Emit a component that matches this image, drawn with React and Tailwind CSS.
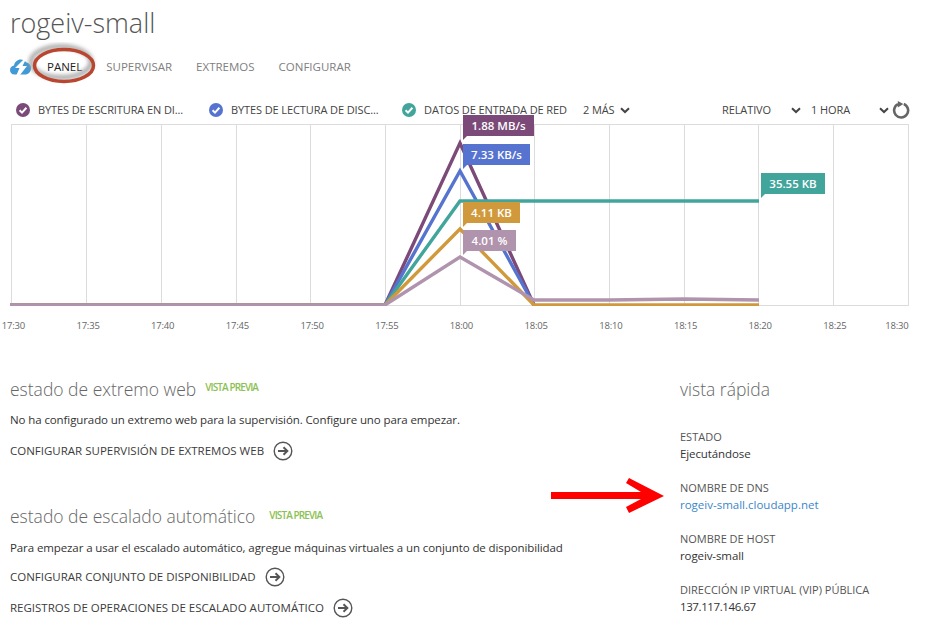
import React from "react";

const font = { fontFamily: '"Open Sans", "Noto Sans", sans-serif' };

const gridLines = [11, 86, 161, 236, 310, 385, 460, 534, 609, 684, 758, 833, 908];
const ticks = ["17:30", "17:35", "17:40", "17:45", "17:50", "17:55", "18:00", "18:05", "18:10", "18:15", "18:20", "18:25"];

const series = [
  { color: "#7b4a78", points: "10,185 385,185 460,23 534,185" },
  { color: "#5673cf", points: "10,185 385,185 460,51 534,185" },
  { color: "#42a59c", points: "10,185 385,185 460,81 759,81" },
  { color: "#d09a3c", points: "10,185 385,185 460,109 534,185 759,185" },
  { color: "#b093ad", points: "10,185 385,185 460,137 534,180 609,180 684,179 759,180" },
];

const tooltips = [
  { text: "1.88 MB/s", box: "left-[463px] top-[-5px] w-[71px] bg-[#7b4a78]", tail: "border-t-[#7b4a78]" },
  { text: "7.33 KB/s", box: "left-[463px] top-[24px] w-[67px] bg-[#5673cf]", tail: "border-t-[#5673cf]" },
  { text: "4.11 KB", box: "left-[463px] top-[82px] w-[57px] bg-[#d09a3c]", tail: "border-t-[#d09a3c]" },
  { text: "4.01 %", box: "left-[463px] top-[110px] w-[53px] bg-[#b093ad]", tail: "border-t-[#b093ad]" },
  { text: "35.55 KB", box: "left-[761px] top-[53px] w-[64px] bg-[#42a59c]", tail: "border-t-[#42a59c]" },
];

const CheckDot = ({ color }) => (
  <svg width="14" height="14" viewBox="0 0 14 14" className="shrink-0">
    <circle cx="7" cy="7" r="7" fill={color} />
    <path d="M3.6 7.2 L6 9.6 L10.4 4.8" fill="none" stroke="#fff" strokeWidth="2" />
  </svg>
);

const Chevron = () => (
  <svg width="10" height="7" viewBox="0 0 10 7" className="shrink-0">
    <path d="M1 1.2 L5 5 L9 1.2" fill="none" stroke="#444" strokeWidth="2" />
  </svg>
);

const CircleArrow = () => (
  <svg width="20" height="20" viewBox="0 0 20 20" className="shrink-0">
    <circle cx="10" cy="10" r="8.8" fill="none" stroke="#555" strokeWidth="1.4" />
    <path d="M5 10 H14 M10.5 6.2 L14.4 10 L10.5 13.8" fill="none" stroke="#555" strokeWidth="1.9" />
  </svg>
);

const LinkRow = ({ children, className }) => (
  <div className={"flex items-center gap-[9px] text-[11.5px] text-[#3c3c3c] " + className}>
    <span>{children}</span>
    <CircleArrow />
  </div>
);

const Preview = ({ className }) => (
  <span className={"text-[10px] font-semibold tracking-[-0.9px] text-[#8cc152] " + className}>VISTA PREVIA</span>
);

const Info = ({ label, value, valueClass, className }) => (
  <div className={"leading-[16px] " + className}>
    <div className="text-[11px] text-[#555]">{label}</div>
    <div className={"mt-[1px] text-[11.5px] " + (valueClass || "tracking-[-0.1px] text-[#333]")}>{value}</div>
  </div>
);

export default function App() {
  return (
    <div style={font} className="w-[931px] h-[626px] overflow-hidden bg-white">
      {/* Title */}
      <h1 className="h-[46px] pl-[10px] flex items-center text-[27px] font-light text-[#555]">rogeiv-small</h1>

      {/* Tabs */}
      <div className="relative h-[40px] pl-[10px] flex items-center">
        <svg width="21" height="16" viewBox="0 0 21 16" className="shrink-0 mt-[2px]">
          <path d="M4.6 15.5 C1.8 15.5 0 13.5 0 11 C0 8.6 1.8 6.8 4 6.6 C4.6 3 7.4 0.6 10.8 0.6 C13 0.6 14.8 1.6 16 3.2 C18.8 3.6 21 6 21 9.2 C21 12.8 18.4 15.5 15 15.5 Z" fill="#3f9ad6" />
          <path d="M14 0 L5 9 L9.5 9 L6.5 16 L10 16 L17 7 L12.5 7 L16 0 Z" fill="#fff" />
        </svg>
        <div className="ml-[16px] mt-[2px] flex items-center gap-6 text-[11.5px] text-[#808080]">
          <span className="text-[#222]">PANEL</span>
          <span>SUPERVISAR</span>
          <span>EXTREMOS</span>
          <span>CONFIGURAR</span>
        </div>
        <svg width="80" height="50" viewBox="0 0 80 50" className="absolute left-[24px] top-[-4px] pointer-events-none">
          <defs>
            <filter id="soft" x="-20%" y="-30%" width="140%" height="160%">
              <feGaussianBlur stdDeviation="2" />
            </filter>
          </defs>
          <ellipse cx="37" cy="20" rx="30" ry="15.5" fill="none" stroke="#9a9a9a" strokeWidth="4" filter="url(#soft)" />
          <ellipse cx="40" cy="23.5" rx="29.5" ry="16" fill="none" stroke="#b9472f" strokeWidth="3.5" />
        </svg>
      </div>

      {/* Legend */}
      <div className="mt-[14px] h-[20px] pl-[16px] pr-[21px] flex items-center text-[11px] tracking-[-0.1px] text-[#444]">
        <div className="w-[193px] flex items-center gap-2">
          <CheckDot color="#7b4a78" />
          <span>BYTES DE ESCRITURA EN DI...</span>
        </div>
        <div className="w-[193px] flex items-center gap-2">
          <CheckDot color="#5673cf" />
          <span>BYTES DE LECTURA DE DISC...</span>
        </div>
        <div className="w-[181px] flex items-center gap-2">
          <CheckDot color="#42a59c" />
          <span>DATOS DE ENTRADA DE RED</span>
        </div>
        <div className="flex items-center gap-[5px]">
          <span>2 MÁS</span>
          <Chevron />
        </div>
        <div className="ml-auto flex items-center">
          <span>RELATIVO</span>
          <span className="ml-[20px]"><Chevron /></span>
          <span className="ml-[10px]">1 HORA</span>
          <span className="ml-[29px]"><Chevron /></span>
          <svg width="18" height="18" viewBox="0 0 18 18" className="ml-[3px] shrink-0">
            <path d="M11.8 3 A7 7 0 1 1 6 3.2" fill="none" stroke="#666" strokeWidth="2.6" />
            <path d="M5.8 0 L11.4 3 L5.8 6.4 Z" fill="#666" />
          </svg>
        </div>
      </div>

      {/* Chart */}
      <div className="relative h-[186px]">
        <svg width="931" height="186" viewBox="0 0 931 186" className="block">
          <line x1="11" y1="4.5" x2="909" y2="4.5" stroke="#dcdcdc" />
          <line x1="11" y1="185.5" x2="909" y2="185.5" stroke="#dcdcdc" />
          {gridLines.map((x) => (
            <line key={x} x1={x + 0.5} y1="4" x2={x + 0.5} y2="186" stroke="#dcdcdc" />
          ))}
          {series.map((s) => (
            <polyline key={s.color} points={s.points} fill="none" stroke={s.color} strokeWidth="3.4" />
          ))}
        </svg>
        {tooltips.map((t) => (
          <div key={t.text} className={"absolute h-[21px] flex items-center justify-center text-[11.5px] font-semibold text-white " + t.box}>
            {t.text}
            <span className={"absolute left-0 top-full w-0 h-0 border-t-[4px] border-r-[4px] border-r-transparent " + t.tail}></span>
          </div>
        ))}
      </div>

      {/* Time axis */}
      <div className="mt-[12px] ml-[-24px] h-[16px] flex text-[9.5px] tracking-[-0.2px] leading-[16px] text-[#666]">
        {ticks.map((t) => (
          <span key={t} className="w-[74.7px] shrink-0 text-center">{t}</span>
        ))}
        <span className="ml-[13px]">18:30</span>
      </div>

      {/* Details */}
      <div className="relative flex pl-[10px] mt-[42px]">
        <div className="w-[670px]">
          <div className="flex items-start h-[26px]">
            <h2 className="text-[17.5px] leading-[26px] font-light text-[#666]">estado de extremo web</h2>
            <Preview className="ml-[9px] mt-[1px] leading-[20px]" />
          </div>
          <p className="mt-[9px] text-[11.5px] tracking-[-0.1px] leading-[18px] text-[#333]">No ha configurado un extremo web para la supervisión. Configure uno para empezar.</p>
          <LinkRow className="mt-[12px]">CONFIGURAR SUPERVISIÓN DE EXTREMOS WEB</LinkRow>
          <div className="mt-[42px] flex items-start h-[26px]">
            <h2 className="text-[17.5px] leading-[26px] font-light text-[#666]">estado de escalado automático</h2>
            <Preview className="ml-[14px] mt-[2px] leading-[20px]" />
          </div>
          <p className="mt-[10px] text-[11.5px] tracking-[-0.1px] leading-[18px] text-[#333]">Para empezar a usar el escalado automático, agregue máquinas virtuales a un conjunto de disponibilidad</p>
          <LinkRow className="mt-[10px]">CONFIGURAR CONJUNTO DE DISPONIBILIDAD</LinkRow>
          <LinkRow className="mt-[11px]">REGISTROS DE OPERACIONES DE ESCALADO AUTOMÁTICO</LinkRow>
        </div>
        <div>
          <h2 className="text-[17.5px] leading-[26px] font-light text-[#666]">vista rápida</h2>
          <Info className="mt-[27px]" label="ESTADO" value="Ejecutándose" />
          <Info className="mt-[18px]" label="NOMBRE DE DNS" value="rogeiv-small.cloudapp.net" valueClass="text-[#3a87c8]" />
          <Info className="mt-[18px]" label="NOMBRE DE HOST" value="rogeiv-small" />
          <Info className="mt-[18px]" label="DIRECCIÓN IP VIRTUAL (VIP) PÚBLICA" value="137.117.146.67" valueClass="tracking-[-0.4px] text-[#333]" />
        </div>
        {/* Red arrow */}
        <svg width="114" height="36" viewBox="0 0 114 36" className="absolute left-[551px] top-[102px]">
          <polygon fill="#ff0000" points="0,14 90,14 75,5 78,0 113,18 78,35 75,29 90,21 0,21" />
        </svg>
      </div>
    </div>
  );
}
